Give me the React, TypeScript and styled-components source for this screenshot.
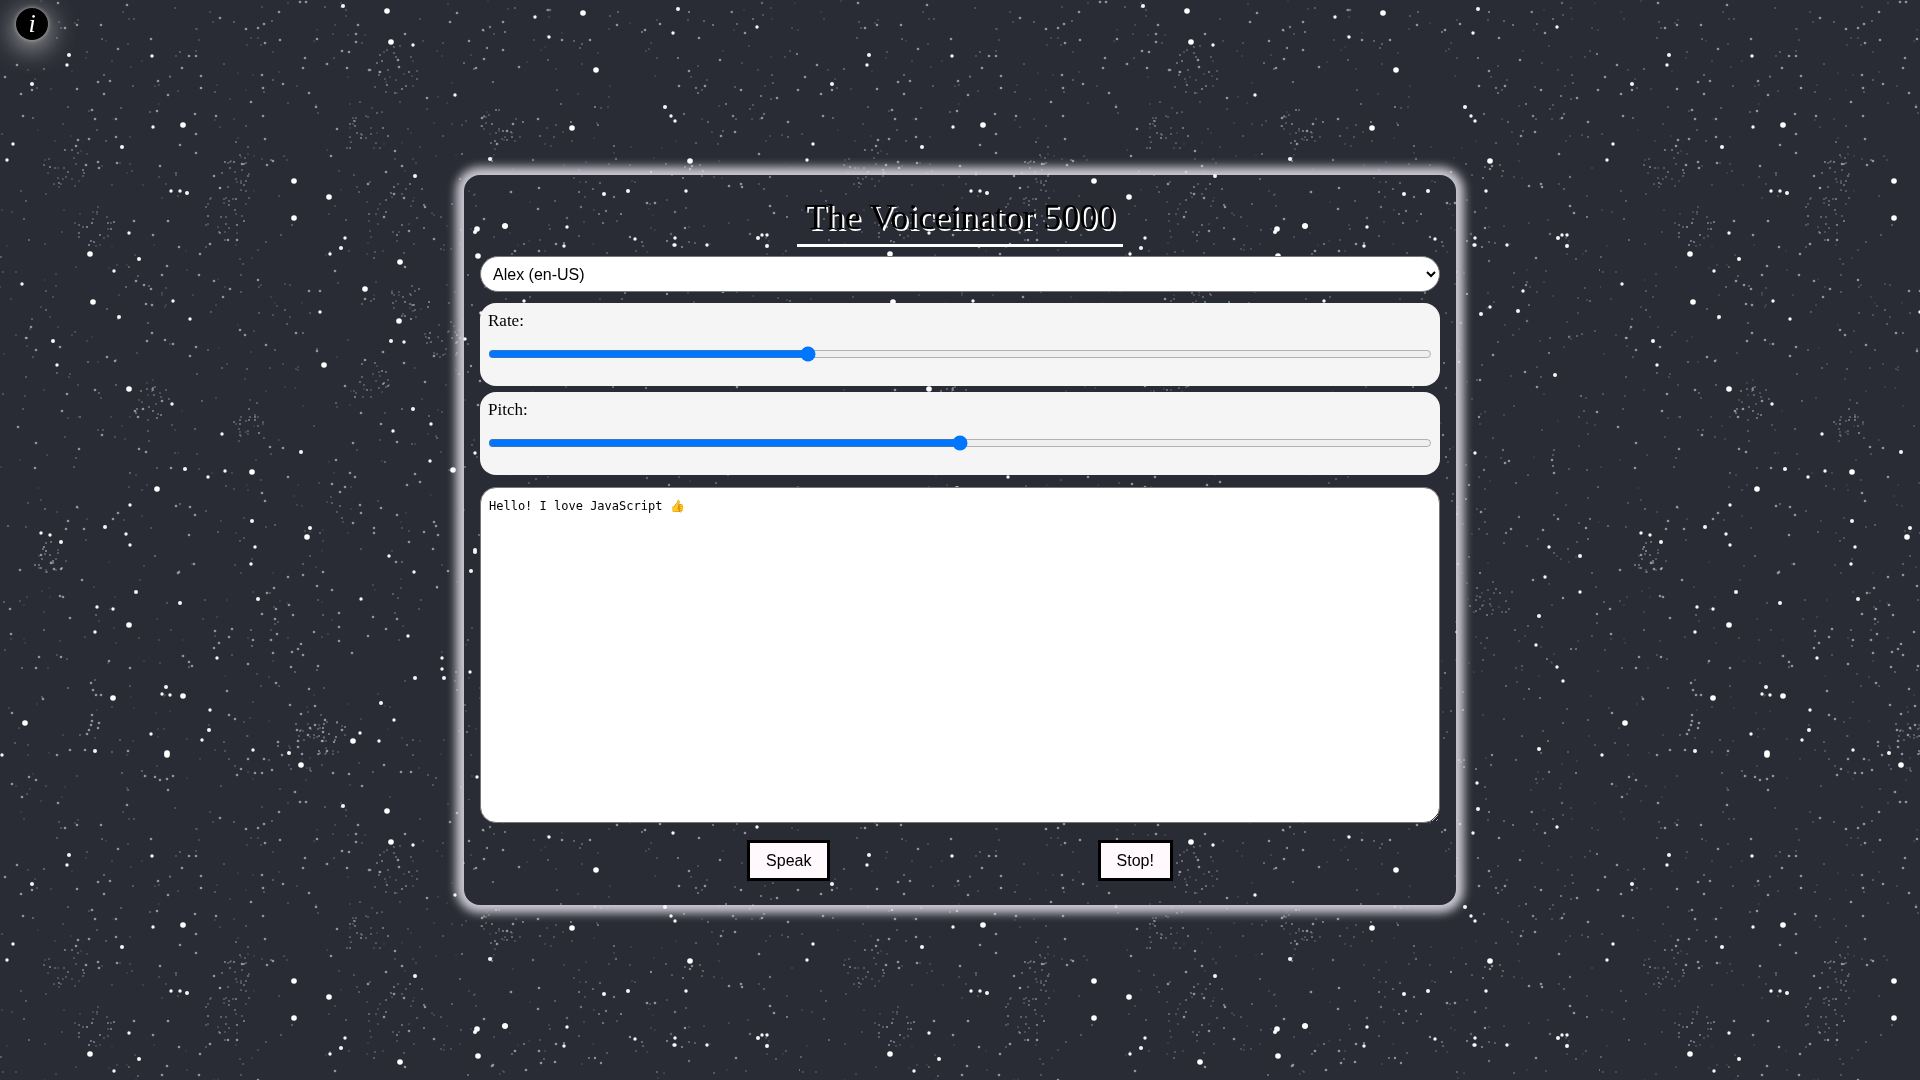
import React, { useState } from "react";
import styled, { createGlobalStyle } from "styled-components";

const serif = `"Liberation Serif", "Times New Roman", serif`;
const sans = `"Liberation Sans", Arial, sans-serif`;
const mono = `"DejaVu Sans Mono", Consolas, monospace`;

const GlobalStyle = createGlobalStyle`
  *, *::before, *::after { box-sizing: border-box; }
  body {
    margin: 0;
    background: #292c34;
    font-family: ${serif};
  }
`;

/* Star chart of one 800 by 800 tile: x, y, x, y, ... */
const TILE = 800;

const bigStars = [
  387, 11, 391, 42, 596, 70, 183, 125, 294, 181, 294, 218, 329, 197, 90, 254, 93, 302, 399, 321,
  365, 289, 324, 365, 129, 389, 157, 489, 252, 137 + 335, 307, 537, 353, 741, 301, 765, 167, 755,
  113, 698, 183, 696, 129, 625, 25, 723, 453, 470, 583, 13, 690, 161, 572, 128, 400, 262, 505, 226,
  477, 260 - 31, 585, 435, 167, 753, 478, 256, 505, 226,
];

const midStars = [
  343, 6, 413, 45, 455, 95, 69, 55, 67, 65, 152, 56, 32, 84, 13, 144, 7, 160, 122, 147, 153, 127,
  129, 233, 139, 259, 114, 271, 22, 284, 119, 317, 173, 301, 190, 319, 53, 341, 57, 365, 320, 312,
  391, 341, 404, 342, 180, 191, 187, 193, 171, 191, 345, 238, 341, 248, 330, 254, 400, 262, 415, 176,
  172, 404, 222, 434, 185, 469, 208, 477, 225, 471, 301, 452, 393, 431, 430, 461, 413, 409, 431, 424,
  130, 505, 105, 527, 41, 533, 50, 535, 61, 542, 126, 534, 130, 545, 252, 521, 255, 547, 251, 564,
  310, 528, 389, 556, 414, 572, 136, 592, 97, 607, 113, 609, 180, 603, 95, 632, 361, 599, 415, 678,
  162, 694, 170, 695, 166, 687, 151, 734, 210, 710, 209, 730, 202, 740, 253, 750, 289, 753, 360, 733,
  379, 741, 381, 703, 394, 720, 442, 658, 444, 678, 442, 669, 2, 755, 95, 751, 217, 658, 408, 636,
  258, 599, 535, 17, 549, 37, 678, 9, 673, 33, 757, 27, 665, 107, 671, 116, 675, 121, 490, 159,
  762, 235, 767, 235, 758, 238, 674, 245, 675, 238, 767, 246, 564, 246, 635, 239, 475, 232, 675, 245,
  707, 245, 604, 194, 567, 227, 686, 191, 628, 191, 524, 301, 723, 291, 718, 311, 690, 307, 481, 313,
  681, 314, 465, 339, 555, 375, 755, 375, 475, 453, 675, 453, 475, 552, 749, 547, 745, 577, 739, 616,
  736, 645, 780, 592, 780, 556, 757, 667, 763, 681, 739, 749, 486, 763, 477, 800 - 23, 471, 571,
  677, 809 - 26, 470, 672, 475, 550, 563, 681,
];

const dimStars = [
  127, 5, 58, 3, 279, 12, 220, 18, 317, 39, 306, 2, 300, 2, 101, 25, 77, 25, 65, 28, 118, 49, 151, 39,
  182, 68, 189, 56, 196, 56, 246, 29, 258, 28, 264, 24, 265, 43, 280, 40, 305, 58, 303, 68, 309, 93,
  316, 107, 358, 25, 356, 34, 356, 42, 342, 51, 349, 52, 327, 64, 347, 68, 369, 70, 405, 34, 450, 22,
  32, 90, 21, 94, 5, 77, 17, 65, 77, 89, 104, 94, 110, 81, 98, 82, 158, 81, 168, 95, 201, 76, 201, 88,
  195, 114, 196, 134, 216, 116, 262, 75, 263, 88, 283, 84, 251, 102, 263, 116, 157, 111, 92, 110,
  95, 119, 116, 119, 116, 137, 78, 140, 76, 146, 89, 139, 98, 162, 99, 168, 86, 165, 117, 163, 160, 166,
  23, 116, 180, 145, 196, 153, 214, 176, 220, 188, 242, 164, 267, 165, 273, 161, 265, 139, 337, 129,
  331, 156, 370, 70, 380, 72, 398, 60, 399, 67, 427, 98, 368, 184, 386, 172, 402, 166, 395, 151,
  404, 198, 394, 194, 384, 217, 409, 231, 425, 207, 434, 239, 405, 267, 365, 299, 335, 271, 320, 291,
  309, 291, 296, 333, 266, 345, 240, 330, 245, 335, 317, 351, 345, 386, 365, 360, 383, 352, 404, 363,
  434, 356, 425, 382, 95, 390, 67, 394, 107, 357, 115, 361, 147, 341, 152, 333, 165, 340, 173, 344,
  196, 347, 190, 356, 31, 327, 26, 338, 36, 350, 60, 347, 146, 304, 152, 305, 136, 281, 144, 285,
  151, 289, 162, 275, 167, 266, 199, 275, 214, 281, 258, 280, 230, 289, 223, 297, 200, 254, 210, 244,
  237, 240, 228, 240, 179, 247, 153, 235, 168, 221, 134, 221, 18, 427, 36, 443, 62, 411, 138, 417,
  135, 411, 143, 409, 162, 401, 139, 449, 146, 452, 102, 435, 79, 449, 171, 468, 35, 468, 77, 507,
  68, 521, 84, 529, 66, 529, 113, 519, 118, 513, 176, 506, 190, 507, 195, 515, 189, 535, 194, 564,
  178, 573, 179, 572, 41, 555, 51, 563, 61, 569, 54, 569, 20, 570, 60, 596, 82, 580, 63, 597, 70, 618,
  10, 609, 11, 634, 36, 668, 39, 657, 61, 657, 109, 661, 130, 668, 91, 683, 93, 690, 96, 695, 101, 695,
  92, 715, 92, 721, 91, 725, 89, 730, 87, 734, 99, 723, 98, 728, 70, 750, 57, 755, 85, 750, 128, 751,
  29, 777, 36, 780, 12, 784, 145, 776, 155, 777, 160, 780, 167, 779, 173, 776, 168, 790, 22, 797,
  43, 699, 12, 713, 183, 656, 189, 662, 192, 666, 215, 631, 219, 643, 214, 648, 232, 629, 229, 637,
  248, 664, 273, 653, 276, 683, 301, 714, 235, 719, 229, 715, 227, 691, 253, 640, 292, 652, 298, 649,
  303, 655, 301, 644, 290, 705, 309, 689, 315, 706, 318, 666, 291, 667, 277, 634, 271, 640, 262, 614,
  275, 619, 276, 609, 289, 605, 293, 615, 267, 593, 274, 588, 288, 577, 303, 575, 317, 586, 332, 590,
  323, 572, 339, 613, 339, 627, 314, 632, 339, 641, 368, 636, 386, 629, 397, 619, 352, 653, 373, 617,
  325, 720, 298, 741, 298, 747, 302, 754, 310, 728, 308, 735, 315, 725, 323, 732, 297, 730, 278, 742,
  282, 755, 264, 759, 255, 773, 241, 769, 248, 759, 262, 773, 272, 770, 237, 775, 322, 741, 327, 751,
  333, 773, 349, 774, 384, 765, 401, 772, 411, 772, 295, 792, 362, 786, 342, 730, 336, 460, 355, 477,
  332, 484, 283, 448, 270, 447, 288, 477, 265, 501, 262, 493, 340, 492, 345, 487, 350, 473, 361, 413,
  353, 443, 381, 424, 397, 515, 381, 508, 397, 442, 415, 474, 420, 482, 407, 485, 360, 505, 353, 523,
  361, 513, 374, 528, 374, 533, 438, 535, 433, 549, 424, 532, 409, 542, 396, 562, 437, 587, 434, 522,
  436, 526, 448, 571, 617, 25, 562, 40, 590, 40, 503, 50, 519, 67, 476, 68, 484, 59, 457, 13, 469, 41,
  483, 30, 503, 22, 645, 30, 660, 24, 699, 38, 679, 86, 705, 86, 741, 90, 689, 71, 720, 60, 745, 33,
  777, 98, 798, 90, 788, 122, 762, 118, 735, 132, 721, 136, 759, 154, 482, 118, 513, 124, 497, 144,
  507, 131, 538, 119, 539, 188, 538, 209, 511, 192, 515, 251, 539, 251, 647, 203, 655, 203, 729, 186,
  742, 187, 770, 206, 774, 213, 741, 184, 484, 219, 493, 265, 526, 270, 541, 263, 555, 262, 556, 244,
  493, 356, 680, 380, 478, 405, 705, 463, 709, 461, 752, 460, 754, 473, 800 - 3, 412, 737, 387,
  725, 372, 693, 355, 492, 266, 480, 381, 681, 512, 711, 529, 743, 530, 758, 519, 786, 528, 733, 580,
];

function randomFrom(seed: number) {
  let state = seed;
  return () => {
    state = (state * 1664525 + 1013904223) % 4294967296;
    return state / 4294967296;
  };
}

function scatterDust() {
  const next = randomFrom(5000);
  const dust: { x: number; y: number; r: number; o: number }[] = [];
  for (let i = 0; i < 1150; i++) {
    dust.push({
      x: Math.round(next() * TILE),
      y: Math.round(next() * TILE),
      r: 0.7 + next() * 0.4,
      o: 0.15 + next() * 0.3,
    });
  }
  for (let i = 0; i < 260; i++) {
    dust.push({
      x: Math.round(460 + next() * 340),
      y: Math.round(next() * TILE),
      r: 0.8 + next() * 0.5,
      o: 0.35 + next() * 0.3,
    });
  }
  /* tight clusters: centre x, centre y, radius */
  const clusters = [
    [390, 70, 28], [365, 130, 26], [64, 168, 22], [225, 214, 22], [95, 226, 20], [405, 222, 38],
    [240, 172, 20], [410, 300, 20], [445, 340, 20], [50, 558, 18], [305, 745, 30], [325, 735, 22],
    [370, 382, 22], [248, 425, 16], [500, 130, 22], [150, 400, 20], [690, 600, 22],
  ];
  clusters.forEach(([cx, cy, radius]) => {
    for (let i = 0; i < 26; i++) {
      const angle = next() * Math.PI * 2;
      const far = Math.sqrt(next()) * radius;
      dust.push({
        x: Math.round(cx + Math.cos(angle) * far),
        y: Math.round(cy + Math.sin(angle) * far),
        r: 0.8 + next() * 0.3,
        o: 0.25 + next() * 0.35,
      });
    }
  });
  return dust;
}

const dust = scatterDust();

function pairs(list: number[]) {
  const out: [number, number][] = [];
  for (let i = 0; i < list.length; i += 2) out.push([list[i], list[i + 1]]);
  return out;
}

const Sky = styled.svg`
  position: fixed;
  inset: 0;
  z-index: -1;
  width: 100%;
  height: 100%;
`;

function StarrySky() {
  return (
    <Sky aria-hidden="true">
      <defs>
        <pattern id="stars" width={TILE} height={TILE} patternUnits="userSpaceOnUse">
          <rect width={TILE} height={TILE} fill="#292c34" />
          <g fill="#c9ced8">
            {dust.map((d, i) => (
              <circle key={i} cx={d.x} cy={d.y} r={d.r} opacity={d.o} />
            ))}
          </g>
          <g fill="#d5d8de" opacity="0.6">
            {pairs(dimStars).map(([x, y], i) => (
              <circle key={i} cx={x} cy={y} r="1.3" />
            ))}
          </g>
          <g fill="#f4f6f8">
            {pairs(midStars).map(([x, y], i) => (
              <circle key={i} cx={x} cy={y} r={i % 3 ? 1.7 : 2} />
            ))}
          </g>
          <g fill="#ffffff">
            {pairs(bigStars).map(([x, y], i) => (
              <circle key={i} cx={x} cy={y} r="2.8" />
            ))}
          </g>
        </pattern>
      </defs>
      <rect width="100%" height="100%" fill="url(#stars)" />
    </Sky>
  );
}

const InfoButton = styled.button`
  position: absolute;
  top: 8px;
  left: 16px;
  width: 32px;
  height: 32px;
  padding: 0;
  border: 0;
  border-radius: 50%;
  background: #000;
  color: #fff;
  font: italic 26px/32px ${serif};
  box-shadow: 0 0 4px rgba(255, 255, 255, 0.5), 0 6px 28px 2px rgba(255, 250, 245, 0.65);
  cursor: pointer;
`;

const Page = styled.main`
  display: flex;
  align-items: center;
  justify-content: center;
  min-height: 100vh;
`;

const Voiceinator = styled.form`
  display: flex;
  flex-direction: column;
  width: 60vw;
  max-width: 992px;
  padding: 16px 16px 24px;
  border-radius: 16px;
  box-shadow: 0 0 10px 8px rgba(248, 243, 255, 0.78);
`;

const Title = styled.h1`
  align-self: center;
  margin: 0 0 9px;
  padding: 4px 8px;
  border-bottom: 3px solid #fff;
  color: #000;
  font: 400 36px/45px ${serif};
  text-shadow: 2px 2px 0 #fff;
`;

const VoiceSelect = styled.select`
  height: 36px;
  margin-bottom: 11px;
  padding: 0 8px;
  border: 1px solid #767676;
  border-radius: 20px;
  background: #fff;
  color: #000;
  font: 16px ${sans};
`;

const Sliders = styled.div`
  display: grid;
  gap: 6px;
  margin-bottom: 12px;
`;

const SliderCard = styled.div`
  display: flex;
  flex-direction: column;
  padding: 8px 8px 24px;
  border-radius: 16px;
  background: #f5f5f5;
`;

const SliderLabel = styled.label`
  margin-bottom: 15px;
  font-size: 17px;
  line-height: 20px;
`;

const Slider = styled.input`
  width: 100%;
  height: 16px;
  margin: 0;
`;

const Message = styled.textarea`
  height: 336px;
  margin-bottom: 17px;
  padding: 10px 8px;
  border: 1px solid #767676;
  border-radius: 16px;
  background: #fff;
  color: #000;
  font: 12px/16px ${mono};
  resize: both;
`;

const Actions = styled.div`
  display: flex;
  justify-content: space-evenly;
`;

const ActionButton = styled.button`
  padding: 8px 16px;
  border: 3px solid #000;
  border-radius: 0;
  background: #fff8fc;
  color: #000;
  font: 16px/19px ${sans};
  cursor: pointer;
`;

export default function App() {
  const [rate, setRate] = useState(1.01);
  const [pitch, setPitch] = useState(1);
  const [text, setText] = useState("Hello! I love JavaScript 👍");

  return (
    <>
      <GlobalStyle />
      <StarrySky />
      <InfoButton type="button" aria-label="Information">i</InfoButton>
      <Page>
        <Voiceinator onSubmit={(e) => e.preventDefault()}>
          <Title>The Voiceinator 5000</Title>
          <VoiceSelect name="voice" aria-label="Voice">
            <option>Alex (en-US)</option>
          </VoiceSelect>
          <Sliders>
            <SliderCard>
              <SliderLabel htmlFor="rate">Rate:</SliderLabel>
              <Slider id="rate" type="range" min={0} max={3} step={0.01} value={rate}
                onChange={(e) => setRate(Number(e.target.value))} />
            </SliderCard>
            <SliderCard>
              <SliderLabel htmlFor="pitch">Pitch:</SliderLabel>
              <Slider id="pitch" type="range" min={0} max={2} step={0.1} value={pitch}
                onChange={(e) => setPitch(Number(e.target.value))} />
            </SliderCard>
          </Sliders>
          <Message aria-label="Message" spellCheck={false} value={text}
            onChange={(e) => setText(e.target.value)} />
          <Actions>
            <ActionButton type="submit">Speak</ActionButton>
            <ActionButton type="button">Stop!</ActionButton>
          </Actions>
        </Voiceinator>
      </Page>
    </>
  );
}
